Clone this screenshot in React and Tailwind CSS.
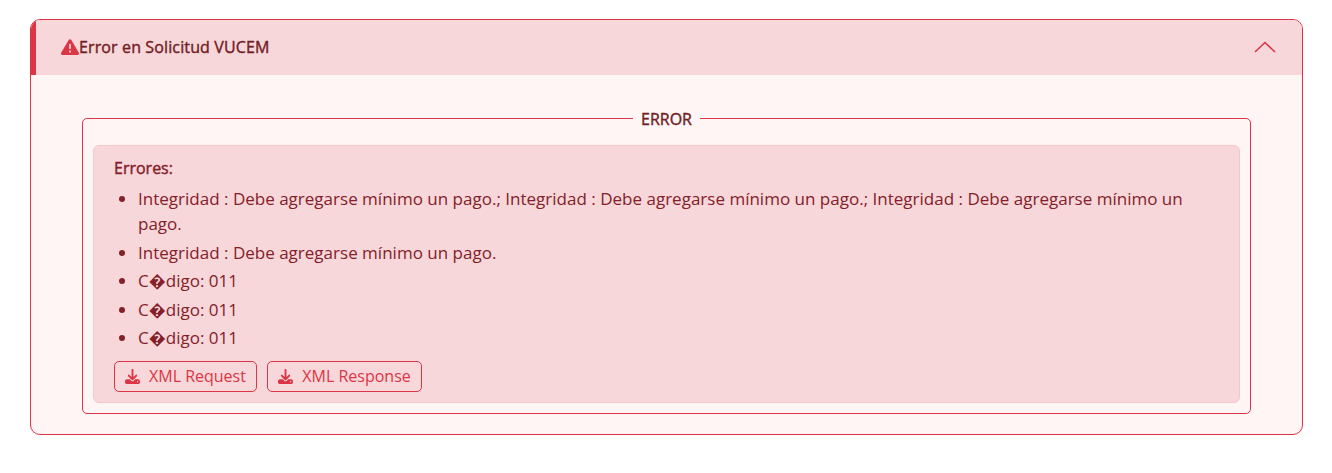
import React from 'react';
import { FaDownload, FaTriangleExclamation } from 'react-icons/fa6';

const errores = [
  'Integridad : Debe agregarse mínimo un pago.; Integridad : Debe agregarse mínimo un pago.; Integridad : Debe agregarse mínimo un pago.',
  'Integridad : Debe agregarse mínimo un pago.',
  'C\uFFFDdigo: 011',
  'C\uFFFDdigo: 011',
  'C\uFFFDdigo: 011',
];

const DownloadButton = ({ label }) => (
  <button className="flex items-center gap-[9px] h-[31px] pl-[10px] pr-[10.4px] border border-[#dc3545] rounded-[5px] text-[#dc3545] text-[16px] leading-6">
    <FaDownload className="w-[15px] h-[15px]" />
    <span>{label}</span>
  </button>
);

export default function App() {
  return (
    <div className="min-h-[473px] bg-white pt-[19px] px-[30px] pr-[29px] font-['Open_Sans',sans-serif]">
      <div className="border border-[#dc3545] rounded-[10px] bg-[#fff5f5] overflow-hidden">
        {/* Header */}
        <div className="flex items-center justify-between h-[55px] bg-[#f8d7da] border-l-[5px] border-[#dc3545] pl-[25px] pr-[26px] pb-[2px]">
          <div className="flex items-center text-[#721c24] text-[16px] tracking-[0.125px] [-webkit-text-stroke:0.4px]">
            <FaTriangleExclamation className="w-[18px] h-[18px] text-[#dc3545]" />
            <span>Error en Solicitud VUCEM</span>
          </div>
          <svg className="w-[22px] h-[12px] text-[#dc3545]" viewBox="0 0 22 12" fill="none" stroke="currentColor" strokeWidth="1.6">
            <path d="M1 11 L11 1.5 L21 11" />
          </svg>
        </div>

        {/* Body */}
        <div className="pt-[31px] pb-[20px] px-[51px]">
          <fieldset className="border border-[#dc3545] rounded-[5px] px-[10px] pb-[10px]">
            <legend className="mx-auto px-[8px] pt-[2px] text-[16px] text-[#721c24] leading-[22px] [-webkit-text-stroke:0.4px]">ERROR</legend>
            <div className="mt-[15px] bg-[#f8d7da] border border-[#f5c6cb] rounded-[6px] pt-[10px] pb-[10px] px-[20px]">
              <div className="text-[16px] leading-6 text-[#842029] [-webkit-text-stroke:0.4px]">Errores:</div>
              <ul className="list-disc pl-[24px] mt-[5.6px] text-[17.02px] leading-[25.5px] text-[#842029]">
                {errores.map((e, i) => (
                  <li key={i} className="mb-[3px]">{e}</li>
                ))}
              </ul>
              <div className="flex gap-[10px] mt-[10px]">
                <DownloadButton label="XML Request" />
                <DownloadButton label="XML Response" />
              </div>
            </div>
          </fieldset>
        </div>
      </div>
    </div>
  );
}
